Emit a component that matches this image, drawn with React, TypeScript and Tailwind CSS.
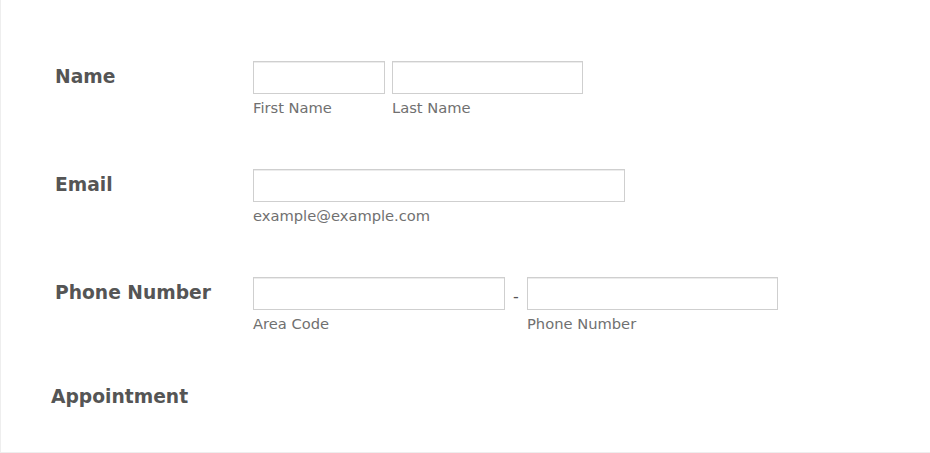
import React from 'react';

const Field = ({ width, sub }: { width: string; sub: string }) => (
  <div className="flex flex-col">
    <input
      type="text"
      className={`${width} h-[33px] border border-[#cfcfcf] bg-white shadow-[inset_0_1px_0_#ececec] outline-none`}
    />
    <span className="mt-[5px] whitespace-nowrap text-[14.7px] leading-[17px] text-[#707070]">{sub}</span>
  </div>
);

const Row = ({ label, children }: { label: string; children: React.ReactNode }) => (
  <div className="flex h-[108px] items-start">
    <label className="w-[252px] shrink-0 whitespace-nowrap pl-[54px] pt-[4px] text-[18.7px] font-bold leading-[24px] text-[#555555]">
      {label}
    </label>
    <div className="flex items-start">{children}</div>
  </div>
);

export default function App() {
  return (
    <div
      className="h-[453px] w-[930px] overflow-hidden border-b border-l border-[#eeeeee] bg-white pt-[61px]"
      style={{ fontFamily: '"DejaVu Sans", sans-serif' }}
    >
      <Row label="Name">
        <Field width="w-[132px]" sub="First Name" />
        <div className="w-[7px]" />
        <Field width="w-[191px]" sub="Last Name" />
      </Row>
      <Row label="Email">
        <Field width="w-[372px]" sub="example@example.com" />
      </Row>
      <Row label="Phone Number">
        <Field width="w-[252px]" sub="Area Code" />
        <span className="w-[22px] pt-[8px] text-center text-[16px] text-[#555555]">-</span>
        <Field width="w-[251px]" sub="Phone Number" />
      </Row>
      <div className="pl-[50px] text-[18.7px] font-bold leading-[24px] text-[#555555]">Appointment</div>
    </div>
  );
}
